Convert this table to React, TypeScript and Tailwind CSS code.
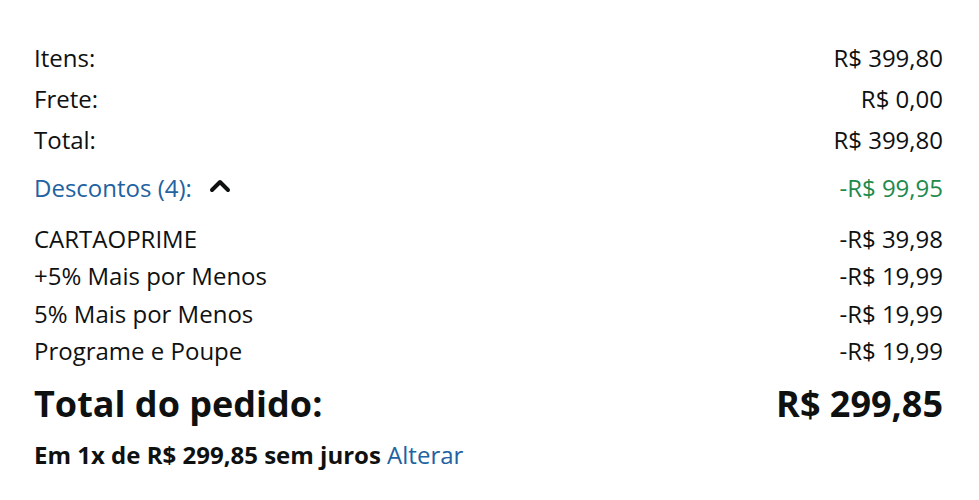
import { ChevronUp } from "lucide-react";

const discounts = [
  { label: "CARTAOPRIME", value: "-R$ 39,98" },
  { label: "+5% Mais por Menos", value: "-R$ 19,99" },
  { label: "5% Mais por Menos", value: "-R$ 19,99" },
  { label: "Programe e Poupe", value: "-R$ 19,99" },
];

function Row({ label, value }: { label: string; value: string }) {
  return (
    <div className="flex justify-between items-center h-[41px]">
      <span>{label}</span>
      <span>{value}</span>
    </div>
  );
}

export default function App() {
  return (
    <div
      className="w-[979px] h-[500px] bg-white text-[#0f1111] text-[24px] pl-[34px] pr-[36px] pt-[37px]"
      style={{ fontFamily: '"Open Sans", "Noto Sans", sans-serif' }}
    >
      <Row label="Itens:" value="R$ 399,80" />
      <Row label="Frete:" value="R$ 0,00" />
      <Row label="Total:" value="R$ 399,80" />

      <div className="flex justify-between items-center h-[56px]">
        <span className="flex items-center gap-[12px] text-[#2162a1]">
          Descontos (4):
          <ChevronUp size={32} strokeWidth={3} className="text-[#0f1111] -mt-1" />
        </span>
        <span className="text-[#1e8a4c]">-R$ 99,95</span>
      </div>

      <div className="pt-1">
        {discounts.map((d) => (
          <div key={d.label} className="flex justify-between items-center h-[37.5px]">
            <span>{d.label}</span>
            <span>{d.value}</span>
          </div>
        ))}
      </div>

      <div className="flex justify-between items-center h-[58px] mt-[5px] text-[36px] font-bold">
        <span>Total do pedido:</span>
        <span>R$ 299,85</span>
      </div>

      <div className="text-[24px] pt-[4px]">
        <span className="font-bold">Em 1x de R$ 299,85 sem juros</span>{" "}
        <span className="text-[#2162a1]">Alterar</span>
      </div>
    </div>
  );
}
